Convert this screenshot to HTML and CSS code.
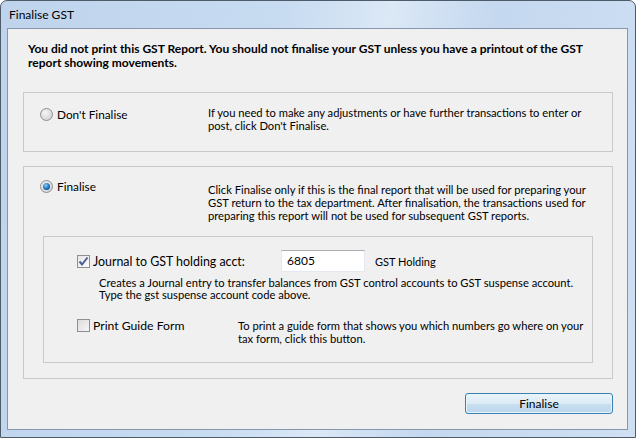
FILE: index.html
```html
<!DOCTYPE html>
<html lang="en">
<head>
  <meta charset="UTF-8">
  <meta name="viewport" content="width=device-width, initial-scale=1.0">
  <link rel="stylesheet" href="styles.css">
  <title>Finalise GST</title>
</head>
<body>

<div class="window">
  <div class="titlebar">Finalise GST</div>

  <div class="client">
    <p class="warning">You did not print this GST Report. You should not finalise your GST unless you have a printout of the GST report showing movements.</p>

    <!-- Don't finalise option -->
    <div class="group group-skip">
      <label class="option">
        <span class="radio"></span>
        <span>Don't Finalise</span>
      </label>
      <p class="desc">If you need to make any adjustments or have further transactions to enter or post, click Don't Finalise.</p>
    </div>

    <!-- Finalise option -->
    <div class="group group-final">
      <label class="option">
        <span class="radio checked"></span>
        <span>Finalise</span>
      </label>
      <p class="desc desc-final">Click Finalise only if this is the final report that will be used for preparing your GST return to the tax department. After finalisation, the transactions used for preparing this report will not be used for subsequent GST reports.</p>

      <div class="subgroup">
        <div class="journal-row">
          <label class="check-label journal-label">
            <span class="checkbox checked">
              <svg width="11" height="11" viewBox="0 0 11 11"><path d="M1.5 5.5 L4 8.5 L9.5 1.5" fill="none" stroke="#4a5f97" stroke-width="2"/></svg>
            </span>
            <span>Journal to GST holding acct:</span>
          </label>
          <div class="acct-input">6805</div>
          <span class="acct-name">GST Holding</span>
        </div>
        <p class="desc journal-desc">Creates a Journal entry to transfer balances from GST control accounts to GST suspense account.<br>Type the gst suspense account code above.</p>

        <div class="print-row">
          <label class="check-label print-label">
            <span class="checkbox"></span>
            <span>Print Guide Form</span>
          </label>
          <p class="desc print-desc">To print a guide form that shows you which numbers go where on your tax form, click this button.</p>
        </div>
      </div>
    </div>

    <div class="actions">
      <button class="btn-default">Finalise</button>
    </div>
  </div>
</div>

</body>
</html>
```

FILE: styles.css
```css
body {
  margin: 0;
  padding: 0;
  font-family: Lato, "Liberation Sans", sans-serif;
  font-size: 11.2px;
  color: #000;
  background: #fff;
}

.window {
  width: 636px;
  height: 438px;
  box-sizing: border-box;
  border: 1px solid #4d5b6b;
  border-radius: 7px 7px 0 0;
  background: linear-gradient(100deg, #bfd4ec 0%, #c7dbf1 40%, #dbe8f6 55%, #c4d8ef 70%, #cfe0f3 100%);
  display: flex;
  flex-direction: column;
  padding: 0 7px 7px 6px;
}

.titlebar {
  height: 27px;
  line-height: 28px;
  padding-left: 2px;
  font-size: 12px;
  color: #000;
}

.client {
  flex: 1;
  background: #f0f0f0;
  border: 1px solid #8497ad;
  padding: 13px 14px 0 15px;
  display: flex;
  flex-direction: column;
}

.warning {
  margin: 0 0 22px 5px;
  font-weight: bold;
  font-size: 12px;
  line-height: 14px;
}

p {
  margin: 0;
}

.group {
  border: 1px solid #c9c9c9;
  display: grid;
  grid-template-columns: 168px 1fr;
  padding: 0 16px;
}

.group-skip {
  padding-top: 14px;
  box-sizing: border-box;
  height: 60px;
  margin-bottom: 14px;
}

.group-final {
  padding-top: 12px;
  padding-bottom: 15px;
  margin-bottom: 14px;
}

.option {
  display: flex;
  align-items: center;
  gap: 4px;
  height: 14px;
  font-size: 11.8px;
}

.desc {
  line-height: 13px;
  margin-top: -1px;
}

.desc-final {
  margin-top: 4px;
}

.radio {
  width: 11px;
  height: 11px;
  border: 1px solid #8f8f8f;
  border-radius: 50%;
  background: radial-gradient(circle at 40% 35%, #f4f4f4 0%, #dcdcdc 60%, #c8c8c8 100%);
  display: flex;
  align-items: center;
  justify-content: center;
}

.radio.checked::after {
  content: '';
  width: 7px;
  height: 7px;
  border-radius: 50%;
  background: radial-gradient(circle at 40% 35%, #8ad0f5 0%, #1c6fb8 55%, #0d3d7c 100%);
}

.subgroup {
  grid-column: 1 / 3;
  margin: 14px 3px 0 3px;
  border: 1px solid #c9c9c9;
  padding: 13px 0 17px 33px;
}

.journal-row {
  display: flex;
  align-items: center;
  height: 22px;
}

.check-label {
  display: flex;
  align-items: center;
  gap: 3px;
  font-size: 12px;
}

.journal-label {
  width: 204px;
  font-size: 12.4px;
}

.checkbox {
  width: 11px;
  height: 11px;
  border: 1px solid #8f8f8f;
  background: linear-gradient(135deg, #dcdcdc 0%, #f6f6f6 100%);
  display: flex;
  align-items: center;
  justify-content: center;
}

.checkbox.checked {
  background: linear-gradient(135deg, #e6e6e6 0%, #fbfbfb 100%);
}

.acct-input {
  width: 84px;
  height: 22px;
  box-sizing: border-box;
  background: #fff;
  border: 1px solid #e3e9ef;
  border-top-color: #abadb3;
  padding: 0 5px;
  line-height: 20px;
  font-size: 12px;
  margin-right: 10px;
}

.acct-name {
  font-size: 11px;
}

.journal-desc {
  margin: 5px 0 0 22px;
  line-height: 12px;
}

.print-row {
  display: flex;
  align-items: flex-start;
  margin-top: 18px;
}

.print-label {
  width: 161px;
  height: 14px;
  margin-top: -1px;
  font-size: 12.2px;
}

.print-desc {
  width: 350px;
}

.print-row .desc {
  margin-top: 0;
}

.actions {
  display: flex;
  justify-content: flex-end;
}

.btn-default {
  width: 148px;
  height: 21px;
  font-family: Lato, "Liberation Sans", sans-serif;
  font-size: 12px;
  color: #000;
  border: 1px solid #3c7fb1;
  border-radius: 3px;
  box-shadow: inset 0 0 0 1px #e6f4fc;
  background: linear-gradient(#eaf4fb 0%, #dcebf6 50%, #c8dff0 51%, #bcd6ec 100%);
  padding: 0;
  cursor: pointer;
}
```
